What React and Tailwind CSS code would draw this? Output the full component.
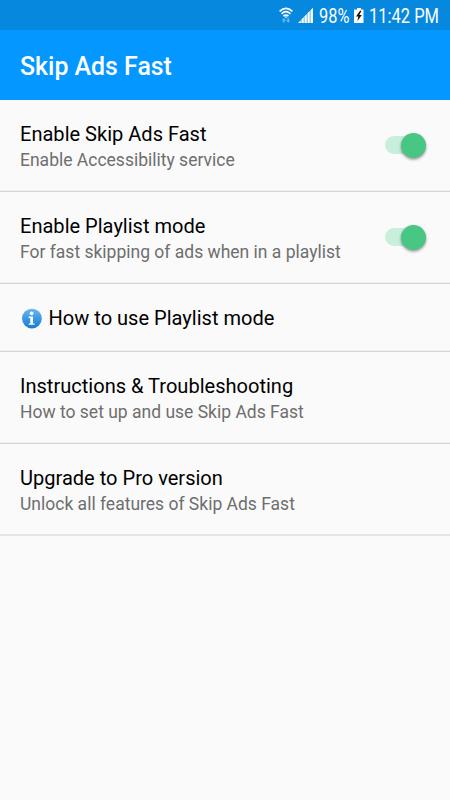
import React from "react";

function StatusBar() {
  return (
    <div className="flex h-[30px] items-center bg-[#0688de] text-white">
      <svg className="ml-[279px] h-[30px] w-[36px] shrink-0" viewBox="0 0 36 30" fill="none">
        <g stroke="white" strokeWidth="1.6">
          <path d="M0.6 11.3Q7 5.3 13.4 11.3" />
          <path d="M2.6 13.8Q7 9.6 11.4 13.800" />
          <path d="M4.5 16.2Q7 13.7 9.5 16.2" />
        </g>
        <path d="M5.4 16.4h3.2L7 18.2z" fill="white" />
        <path d="M4.8 18L7 20.4H5.7V22.5H3.9V20.4H2.6zM9.2 22.8L7 20.4H8.3V18H10.1V20.4H11.4z" fill="#63b7ef" />
        <g fill="white">
          <path d="M19 23L21.8 20.2V23z" />
          <path d="M22.4 19.5L24.8 17.1V23H22.4z" />
          <path d="M25.4 16.4L27.8 14V23H25.4z" />
          <path d="M28.4 13.3L30.8 10.9V23H28.4z" />
          <path d="M31.4 10.3L34 7.7V23H31.4z" />
        </g>
      </svg>
      <div className="ml-1 mt-[4px] w-[35px] shrink-0 text-[19.500px] leading-6">
        <span className="inline-block origin-left scale-x-[0.84]">98%</span>
      </div>
      <svg className="h-[30px] w-[10px] shrink-0" viewBox="0 0 10 30">
        <path d="M3 8h4v1.500h2.500V23H0V9.500h3z" fill="white" />
        <path d="M6.200 10.500L2 16.500H4.400L3.300 21.200L7.800 15H5.300L7.400 11z" fill="#111" />
      </svg>
      <div className="ml-[5px] mt-[4px] shrink-0 whitespace-nowrap text-[19.500px] leading-6">
        <span className="inline-block origin-left scale-x-[0.846]">11:42 PM</span>
      </div>
    </div>
  );
}

function Toggle() {
  return (
    <div className="flex h-[18px] w-[41px] shrink-0 items-center justify-end rounded-full bg-linear-to-r from-[#c8efdb] from-75% to-transparent to-75%">
      <div className="size-[25px] shrink-0 rounded-full bg-[#48c784] shadow-[0_1.500px_3px_rgba(0,0,0,0.42)]" />
    </div>
  );
}

function Divider({ even }) {
  return even ? (
    <div className="h-[2px] bg-[#e4e4e4]" />
  ) : (
    <div className="h-[2px] border-b border-[#d6d6d6] bg-[#efefef]" />
  );
}

function Row({ title, summary, toggle, last }) {
  return (
    <div>
      <div className="flex h-[90px] items-center justify-between pl-5 pr-6">
        <div className="mt-[4px] whitespace-nowrap">
          <div className="text-[20.060px] leading-[26px] text-black">{title}</div>
          <div className="text-[17.500px] leading-[26px] text-[#6e6e6e]">{summary}</div>
        </div>
        {toggle && <Toggle />}
      </div>
      <Divider even={last} />
    </div>
  );
}

function InfoIcon() {
  return (
    <svg className="mr-[6px] size-[22px]" viewBox="0 0 22 22">
      <defs>
        <linearGradient id="infoBlue" x2="0" y2="1">
          <stop stopColor="#65b7f3" />
          <stop offset="1" stopColor="#1679d2" />
        </linearGradient>
      </defs>
      <circle cx="11.900" cy="11.600" r="9.900" fill="url(#infoBlue)" />
      <circle cx="11.600" cy="6.300" r="1.900" fill="white" />
      <path d="M8.700 9.600H13V16.400H14.600V17.700H8.700V16.400H10.300V10.900H8.700z" fill="white" />
    </svg>
  );
}

export default function App() {
  return (
    <div className="h-[800px] w-[450px] overflow-hidden bg-[#fafafa] font-['Roboto',sans-serif]">
      <StatusBar />
      <header className="flex h-[70px] items-center bg-[#0497ff] pl-5 pt-1 text-[24.900px] font-medium text-white">
        Skip Ads Fast
      </header>
      <main>
        <Row title="Enable Skip Ads Fast" summary="Enable Accessibility service" toggle />
        <Row title="Enable Playlist mode" summary="For fast skipping of ads when in a playlist" toggle />
        <div className="flex h-[66px] items-center pl-5 pt-[2px] text-[20.060px] text-black">
          <InfoIcon />
          <span className="ml-[0.500px]">How to use Playlist mode</span>
        </div>
        <Divider />
        <Row title="Instructions & Troubleshooting" summary="How to set up and use Skip Ads Fast" />
        <Row title="Upgrade to Pro version" summary="Unlock all features of Skip Ads Fast" last />
      </main>
    </div>
  );
}
